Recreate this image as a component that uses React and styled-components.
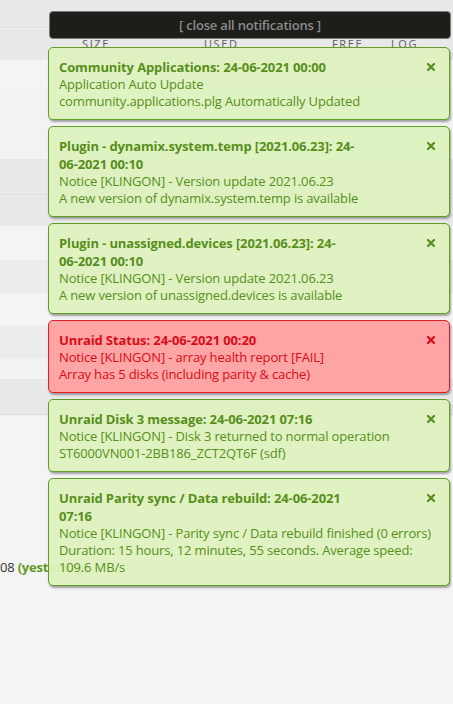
import React from 'react';
import styled, { createGlobalStyle } from 'styled-components';

const GlobalStyle = createGlobalStyle`
  html, body {
    margin: 0;
    padding: 0;
    background: #f4f4f4;
    font-family: "Open Sans", "Noto Sans", sans-serif;
  }
`;

// dashboard table rows sitting underneath the notification tray
const rows = [
  { h: 27, tone: '#e8e8e8' },
  { h: 2, tone: '#efefef', rule: true },
  { h: 31, tone: '#e8e8e8', header: true },
  { h: 27, tone: '#f4f4f4' },
  { h: 72, tone: '#f2f2f2' },
  { h: 35, tone: '#e8e8e8' },
  { h: 2, tone: '#efefef', rule: true },
  { h: 30, tone: '#e8e8e8' },
  { h: 34, tone: '#f4f4f4' },
  { h: 33, tone: '#ececec' },
  { h: 33, tone: '#f4f4f4' },
  { h: 33, tone: '#ececec' },
  { h: 20, tone: '#f2f2f2' },
  { h: 35, tone: '#e8e8e8' },
  { h: 2, tone: '#efefef', rule: true },
];

const notes = [
  {
    level: 'ok',
    subject: 'Community Applications',
    time: '00:00',
    lines: ['Application Auto Update', 'community.applications.plg Automatically Updated'],
  },
  {
    level: 'ok',
    subject: 'Plugin - dynamix.system.temp [2021.06.23]',
    time: '00:10',
    lines: ['Notice [KLINGON] - Version update 2021.06.23', 'A new version of dynamix.system.temp is available'],
  },
  {
    level: 'ok',
    subject: 'Plugin - unassigned.devices [2021.06.23]',
    time: '00:10',
    lines: ['Notice [KLINGON] - Version update 2021.06.23', 'A new version of unassigned.devices is available'],
  },
  {
    level: 'alert',
    subject: 'Unraid Status',
    time: '00:20',
    lines: ['Notice [KLINGON] - array health report [FAIL]', 'Array has 5 disks (including parity & cache)'],
  },
  {
    level: 'ok',
    subject: 'Unraid Disk 3 message',
    time: '07:16',
    lines: ['Notice [KLINGON] - Disk 3 returned to normal operation', 'ST6000VN001-2BB186_ZCT2QT6F (sdf)'],
  },
  {
    level: 'ok',
    subject: 'Unraid Parity sync / Data rebuild',
    time: '07:16',
    lines: [
      'Notice [KLINGON] - Parity sync / Data rebuild finished (0 errors)',
      'Duration: 15 hours, 12 minutes, 55 seconds. Average speed: 109.6 MB/s',
    ],
  },
];

const palette = {
  ok: { bg: '#dff2bf', border: '#5a9a1c', text: '#4f8a10' },
  alert: { bg: '#ffa1a1', border: '#e4141e', text: '#d8000c' },
};

const CloseIcon = ({ color }) => (
  <svg width="8" height="8" viewBox="0 0 8 8">
    <path d="M1 1 L7 7 M7 1 L1 7" stroke={color} strokeWidth="2.2" strokeLinecap="square" />
  </svg>
);

// dd-mm-yyyy, only allowed to wrap after the day
const Stamped = ({ time }) => (
  <>
    24-<NoBreak>06-2021</NoBreak> {time}
  </>
);

const App = () => (
  <Page>
    <GlobalStyle />
    <Table>
      {rows.map((r, i) => (
        <Row key={i} $h={r.h} $tone={r.tone} $rule={r.rule}>
          {r.header && (
            <HeadCells>
              <HeadCell>Size</HeadCell>
              <HeadCell>Used</HeadCell>
              <HeadCell>Free</HeadCell>
              <HeadCell>Log</HeadCell>
            </HeadCells>
          )}
        </Row>
      ))}
    </Table>

    <Status>
      <Stamp>08</Stamp> <Ago>(yesterday)</Ago>
    </Status>

    <Tray>
      <CloseAll>[ close all notifications ]</CloseAll>
      {notes.map((n, i) => {
        const c = palette[n.level];
        return (
          <Note key={i} $bg={c.bg} $border={c.border} $text={c.text}>
            <NoteHead>
              <NoteTitle>
                {n.subject}: <Stamped time={n.time} />
              </NoteTitle>
              <Dismiss>
                <CloseIcon color={c.text} />
              </Dismiss>
            </NoteHead>
            {n.lines.map((l, j) => (
              <NoteLine key={j}>{l}</NoteLine>
            ))}
          </Note>
        );
      })}
    </Tray>
  </Page>
);

const Page = styled.div`
  position: relative;
  width: 453px;
  min-height: 704px;
  overflow: hidden;
`;

const Table = styled.div`
  display: flex;
  flex-direction: column;
`;

const Row = styled.div`
  height: ${p => p.$h}px;
  background: ${p => p.$tone};
  border-top: ${p => (p.$rule ? '1px solid #dedede' : 'none')};
  box-sizing: border-box;
`;

const HeadCells = styled.div`
  display: grid;
  grid-template-columns: 122px 128px 59px auto;
  padding: 8px 0 0 82px;
`;

const HeadCell = styled.div`
  font-size: 11px;
  line-height: 14px;
  letter-spacing: 1.6px;
  text-transform: uppercase;
  color: #5c5c5c;
`;

const Status = styled.div`
  margin-top: 142px;
  font-size: 13px;
  line-height: 18px;
  color: #333;
  white-space: nowrap;
  letter-spacing: -0.2px;
`;

const Stamp = styled.span``;

const Ago = styled.span`
  color: #5e9a1e;
  font-weight: 700;
`;

const Tray = styled.div`
  position: absolute;
  top: 11px;
  left: 48px;
  width: 403px;
  display: flex;
  flex-direction: column;
`;

const CloseAll = styled.div`
  margin: 0 0 8px 1px;
  height: 28px;
  box-sizing: border-box;
  background: #1d1d1a;
  border: 1px solid #7a7a7a;
  border-radius: 4px;
  color: #8c8c8c;
  font-size: 13px;
  font-weight: 600;
  letter-spacing: -0.2px;
  display: flex;
  align-items: center;
  justify-content: center;
`;

const Note = styled.div`
  width: 402px;
  box-sizing: border-box;
  margin-bottom: 6px;
  padding: 10px 12px 9px 10px;
  background: ${p => p.$bg};
  border: 1px solid ${p => p.$border};
  border-radius: 5px;
  color: ${p => p.$text};
  box-shadow: 1px 2px 2px rgba(0, 0, 0, 0.35);
  opacity: 0.95;
  font-size: 13px;
`;

const NoteHead = styled.div`
  display: flex;
  align-items: flex-start;
`;

const NoteTitle = styled.div`
  flex: 1;
  max-width: 300px;
  font-weight: 700;
  line-height: 18px;
  letter-spacing: -0.12px;
`;

const NoBreak = styled.span`
  white-space: nowrap;
`;

const Dismiss = styled.div`
  margin: 5px 2px 0 auto;
  width: 8px;
  height: 8px;
  display: flex;
`;

const NoteLine = styled.div`
  line-height: 17px;
  letter-spacing: -0.15px;
`;

export default App;
